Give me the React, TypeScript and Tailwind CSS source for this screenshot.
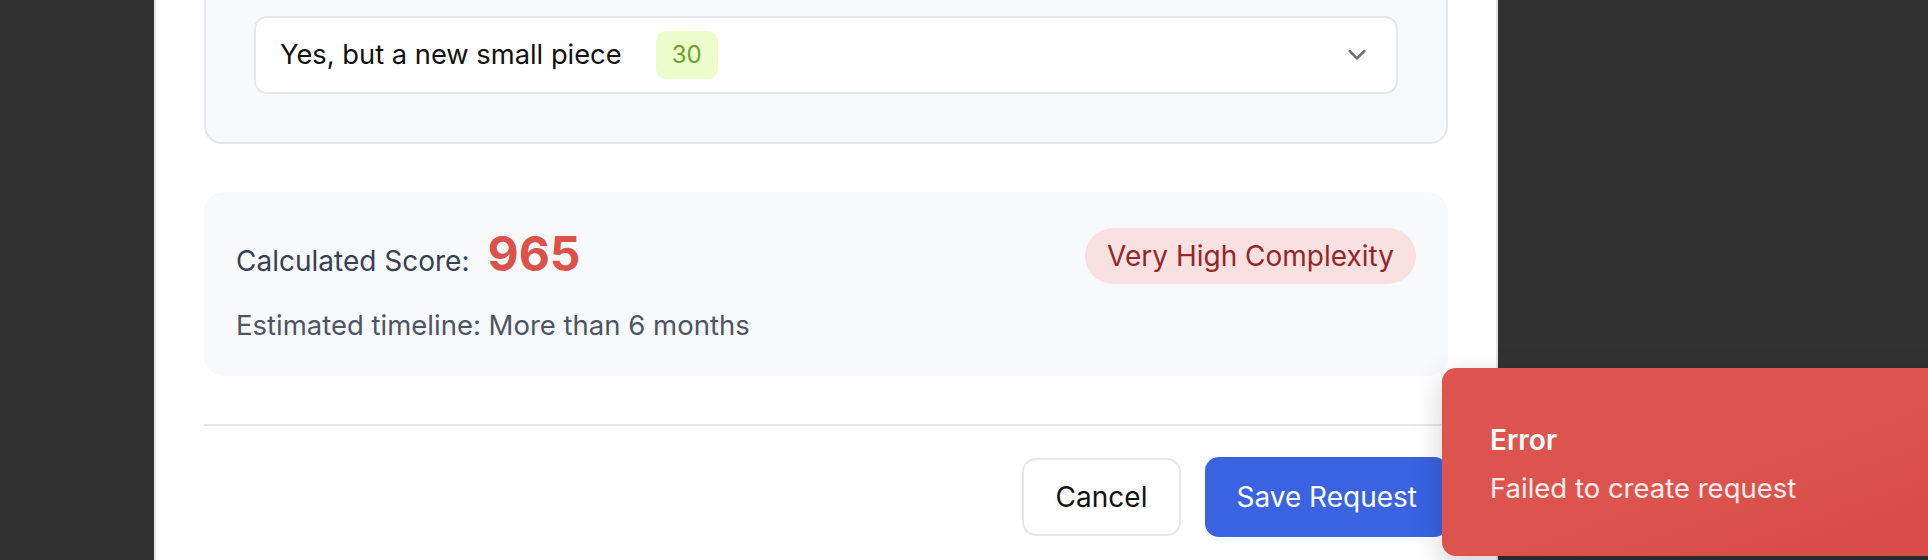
import { useState } from "react";

const font = { fontFamily: '"Inter", "Liberation Sans", sans-serif' };

const Chevron = () => (
  <svg width="18" height="12" viewBox="0 0 18 12" fill="none">
    <path
      d="M1.8 2.2 L9 9.4 L16.2 2.2"
      stroke="#6f6f72"
      strokeWidth="2.6"
      strokeLinecap="round"
      strokeLinejoin="round"
    />
  </svg>
);

const App = () => {
  const [score] = useState(965);

  return (
    <div
      className="relative h-[560px] w-full overflow-hidden bg-[#323232]"
      style={font}
    >
      <div className="flow-root ml-[154px] h-full w-[1344px] border-x-2 border-[#e4e4e7] bg-white">
        <div className="-mt-[34px] px-12">
          {/* question card, top is scrolled away */}
          <div className="rounded-[18px] border-2 border-[#e5e7eb] bg-[#f8f9fb] px-12 pb-12 pt-12">
            <div className="flex h-[78px] items-center justify-between rounded-[13px] border-2 border-[#e5e7eb] bg-white pl-6 pr-[30px]">
              <div className="flex items-center">
                <span className="text-[27.3px] leading-10 text-[#111111]">
                  Yes, but a new small piece
                </span>
                <span className="ml-[34px] rounded-[10px] bg-[#ecfccb] px-4 py-2 text-[24px] leading-8 text-[#6aa22e]">
                  30
                </span>
              </div>
              <Chevron />
            </div>
          </div>

          {/* score summary */}
          <div className="mt-12 flex items-start justify-between rounded-[20px] bg-[#f8f9fb] px-8 pb-[31px] pt-8">
            <div>
              <div className="flex items-baseline">
                <span className="text-[28px] leading-[60px] text-[#374151]">
                  Calculated Score:
                </span>
                <span className="ml-[18px] text-[48px] font-bold leading-[60px] text-[#dc524a]">
                  {score}
                </span>
              </div>
              <p className="mt-[14px] text-[27.5px] leading-10 text-[#4b5563]">
                Estimated timeline: More than 6 months
              </p>
            </div>
            <span className="mt-1 rounded-full bg-[#f9e1e1] px-[22px] py-2 text-[28px] leading-10 text-[#962626]">
              Very High Complexity
            </span>
          </div>

          <div className="mt-12 border-t-2 border-[#e5e7eb] pt-8">
            <div className="flex justify-end gap-6">
              <button className="flex h-[78px] items-center rounded-[14px] border-2 border-[#e5e7eb] bg-white px-8 text-[28px] text-[#111111]">
                Cancel
              </button>
              <button className="-mt-px flex h-[80px] items-center rounded-[14px] bg-[#3a63e2] px-[31px] text-[28px] text-white">
                Save Request
              </button>
            </div>
          </div>
        </div>
      </div>

      {/* toast */}
      <div className="absolute left-[1442px] top-[368px] h-[188px] w-[540px] rounded-[14px] bg-linear-to-br from-[#de544f] via-[#dd534e] to-[#d64b46] pl-12 pt-[52px] shadow-[0_10px_30px_rgba(0,0,0,0.18)]">
        <p className="text-[28px] font-semibold leading-10 text-white">Error</p>
        <p className="mt-2 text-[27.5px] leading-10 text-white/90">
          Failed to create request
        </p>
      </div>
    </div>
  );
};

export default App;
